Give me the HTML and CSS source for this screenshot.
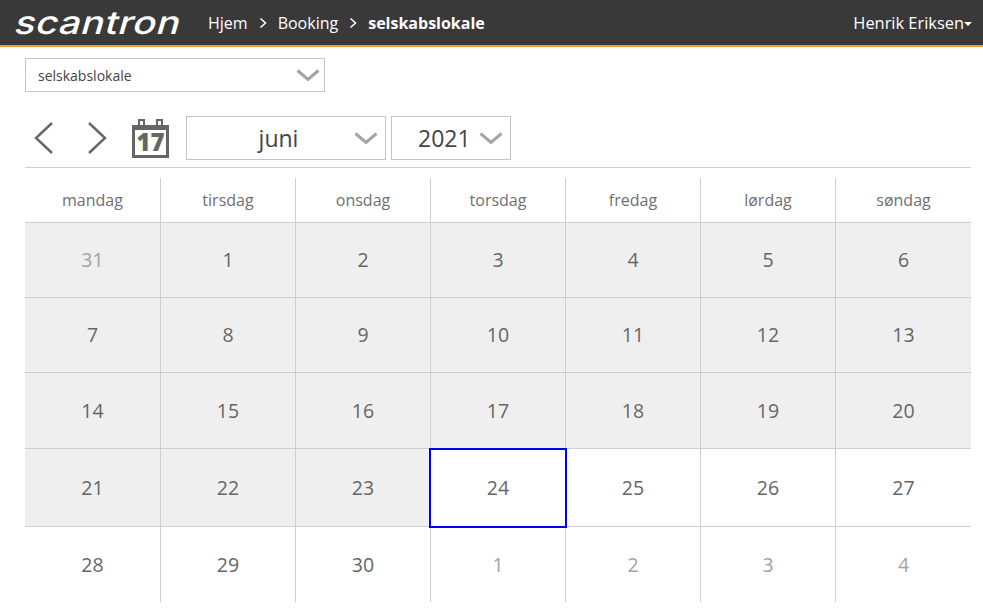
FILE: index.html
```html
<!DOCTYPE html>
<html lang="da">
<head>
    <meta charset="UTF-8">
    <title>Booking</title>
    <link rel="stylesheet" href="styles.css">
</head>
<body>

<header class="topbar">
    <div class="logo-box"><div class="logo">scantron</div></div>
    <nav class="crumbs">
        <span>Hjem</span>
        <svg class="crumb-sep" viewBox="0 0 8 12"><path d="M1.5 1.5 6.5 6 1.5 10.5"/></svg>
        <span>Booking</span>
        <svg class="crumb-sep" viewBox="0 0 8 12"><path d="M1.5 1.5 6.5 6 1.5 10.5"/></svg>
        <b>selskabslokale</b>
    </nav>
    <div class="user">Henrik Eriksen<span class="user-caret"></span></div>
</header>

<main class="content">
    <div class="select select-room">
        <span>selskabslokale</span>
        <svg class="chevron" viewBox="0 0 24 12"><path d="M1.5 1.5 12 10.5 22.5 1.5"/></svg>
    </div>

    <div class="toolbar">
        <svg class="arrow" viewBox="0 0 20 34"><path d="M18 2 2 17 18 32"/></svg>
        <svg class="arrow arrow-next" viewBox="0 0 20 34"><path d="M2 2 18 17 2 32"/></svg>
        <div class="cal-icon">
            <svg viewBox="0 0 37 39">
                <path class="cal-body" d="M0 6h37v33H0zM3 11v25h31V11z" fill-rule="evenodd"/>
                <rect class="cal-ring" x="7" y="1" width="5" height="6"/>
                <rect class="cal-ring" x="25" y="1" width="5" height="6"/>
            </svg>
            <span class="cal-num">17</span>
        </div>
        <div class="select select-month">
            <span>juni</span>
            <svg class="chevron" viewBox="0 0 24 12"><path d="M1.5 1.5 12 10.5 22.5 1.5"/></svg>
        </div>
        <div class="select select-year">
            <span>2021</span>
            <svg class="chevron" viewBox="0 0 24 12"><path d="M1.5 1.5 12 10.5 22.5 1.5"/></svg>
        </div>
    </div>

    <div class="weekdays">
        <div>mandag</div><div>tirsdag</div><div>onsdag</div><div>torsdag</div><div>fredag</div><div>lørdag</div><div>søndag</div>
    </div>

    <div class="month">
        <div class="day past other">31</div><div class="day past">1</div><div class="day past">2</div><div class="day past">3</div><div class="day past">4</div><div class="day past">5</div><div class="day past">6</div>
        <div class="day past">7</div><div class="day past">8</div><div class="day past">9</div><div class="day past">10</div><div class="day past">11</div><div class="day past">12</div><div class="day past">13</div>
        <div class="day past">14</div><div class="day past">15</div><div class="day past">16</div><div class="day past">17</div><div class="day past">18</div><div class="day past">19</div><div class="day past">20</div>
        <div class="day past">21</div><div class="day past">22</div><div class="day past">23</div><div class="day today">24</div><div class="day">25</div><div class="day">26</div><div class="day">27</div>
        <div class="day">28</div><div class="day">29</div><div class="day">30</div><div class="day other">1</div><div class="day other">2</div><div class="day other">3</div><div class="day other">4</div>
    </div>
</main>

</body>
</html>
```

FILE: styles.css
```css
html, body {
    margin: 0;
    height: 612px;
    overflow: hidden;
}
body {
    font-family: "Open Sans", sans-serif;
    color: #666;
    background: #fff;
}
.topbar {
    height: 45px;
    background: #393939;
    border-bottom: 2px solid #f39a32;
    color: #fff;
    display: flex;
    align-items: center;
    font-size: 16px;
}
.logo-box {
    width: 208px;
    flex: none;
    padding-left: 16px;
    box-sizing: border-box;
}
.logo {
    font-family: "Inter", sans-serif;
    font-size: 32px;
    font-weight: 500;
    letter-spacing: 0.4px;
    line-height: 42px;
    white-space: nowrap;
    transform-origin: left center;
    transform: skewX(-16deg) scaleX(1.2);
}
.crumbs {
    display: flex;
    align-items: center;
    gap: 11px;
}
.crumbs b {
    font-weight: 700;
}
.crumb-sep {
    width: 8px;
    height: 12px;
}
.crumb-sep path {
    fill: none;
    stroke: #fff;
    stroke-width: 1.5;
}
.user {
    margin-left: auto;
    padding-right: 11px;
    display: flex;
    align-items: center;
    font-size: 16.4px;
}
.user-caret {
    width: 0;
    height: 0;
    margin-top: 2px;
    border-left: 4px solid transparent;
    border-right: 4px solid transparent;
    border-top: 4px solid #fff;
}
.content {
    padding: 11px 12px 0 25px;
}
.select {
    box-sizing: border-box;
    border: 1px solid #c4c4c4;
    background: #fff;
    display: flex;
    align-items: center;
    color: #444;
}
.select-room {
    width: 300px;
    height: 34px;
    padding: 0 4px 0 12px;
    font-size: 14px;
    justify-content: space-between;
}
.chevron {
    width: 24px;
    height: 12px;
    flex: none;
}
.chevron path {
    fill: none;
    stroke: #a5a5a5;
    stroke-width: 3;
}
.toolbar {
    display: flex;
    align-items: center;
    height: 44px;
    margin-top: 24px;
    padding-bottom: 7px;
    border-bottom: 1px solid #cfcfcf;
}
.arrow {
    width: 20px;
    height: 34px;
    margin-left: 9px;
}
.arrow-next {
    margin-left: 33px;
}
.arrow path {
    fill: none;
    stroke: #666;
    stroke-width: 2.4;
}
.cal-icon {
    position: relative;
    width: 37px;
    height: 39px;
    margin: 0 17px 0 25px;
}
.cal-icon svg {
    display: block;
    width: 37px;
    height: 39px;
}
.cal-body {
    fill: #666;
}
.cal-ring {
    fill: #fff;
    stroke: #666;
    stroke-width: 2;
}
.cal-num {
    position: absolute;
    top: 12px;
    left: 0;
    right: 0;
    height: 22px;
    line-height: 22px;
    text-align: center;
    font-size: 24px;
    font-weight: 800;
    color: #666;
}
.select-month, .select-year {
    height: 44px;
    font-size: 23px;
}
.select-month {
    width: 200px;
    padding: 0 7px 0 16px;
}
.select-month span {
    flex: 1;
    text-align: center;
}
.select-year {
    width: 120px;
    margin-left: 5px;
    padding: 0 7px 0 26px;
    justify-content: space-between;
}
.weekdays, .month {
    display: grid;
    grid-template-columns: repeat(6, 135px) 136px;
}
.weekdays {
    height: 44px;
    margin-top: 10px;
    border-bottom: 1px solid #cfcfcf;
}
.weekdays div {
    display: flex;
    align-items: center;
    justify-content: center;
    font-size: 16px;
    color: #6f6f6f;
}
.weekdays div + div {
    border-left: 1px solid #cfcfcf;
}
.month {
    grid-template-rows: 75px 75px 76px 78px 75px;
}
.day {
    display: flex;
    align-items: center;
    justify-content: center;
    font-size: 19.5px;
    line-height: 26px;
    border-left: 1px solid #cfcfcf;
    border-bottom: 1px solid #cfcfcf;
    position: relative;
}
.day:nth-child(7n+1) {
    border-left: none;
}
.day:nth-last-child(-n+7) {
    border-bottom: none;
}
.past {
    background: #efefef;
}
.other {
    color: #a3a3a3;
}
.today {
    z-index: 1;
}
.today::after {
    content: "";
    position: absolute;
    top: -1px;
    left: -2px;
    right: -2px;
    bottom: -2px;
    border: 2px solid #0000f0;
}
```
